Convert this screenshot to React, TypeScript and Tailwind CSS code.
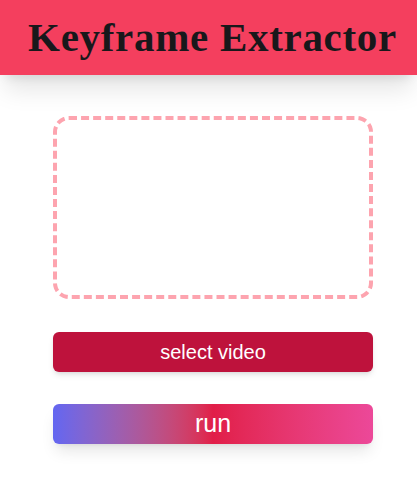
import React from "react";

const App: React.FC = () => {
    return (
        <div className="min-h-screen bg-white font-['Liberation_Sans',Arial,sans-serif]">
            <header className="h-[75px] bg-[#f43f5e] shadow-xl flex items-center justify-center pl-[8px]">
                <h1 className="text-[41px] leading-none font-bold text-[#18181b] font-['Liberation_Serif','Times_New_Roman',serif] tracking-[0.7px]">
                    Keyframe Extractor
                </h1>
            </header>

            <main className="flex justify-center pl-[9px] pt-[41px]">
                <div className="w-80 flex flex-col">
                    <div className="h-[183px] w-[320px] rounded-2xl border-4 border-dashed border-[#fda4af]"></div>

                    <button className="mt-[33px] h-10 rounded-md bg-[#be123c] text-xl text-white shadow-md">
                        select video
                    </button>

                    <button className="mt-8 h-10 rounded-md bg-linear-to-r from-[#6366f1] via-[#e11d48] to-[#ec4899] text-[25px] text-white shadow-lg">
                        run
                    </button>
                </div>
            </main>
        </div>
    );
};

export default App;
